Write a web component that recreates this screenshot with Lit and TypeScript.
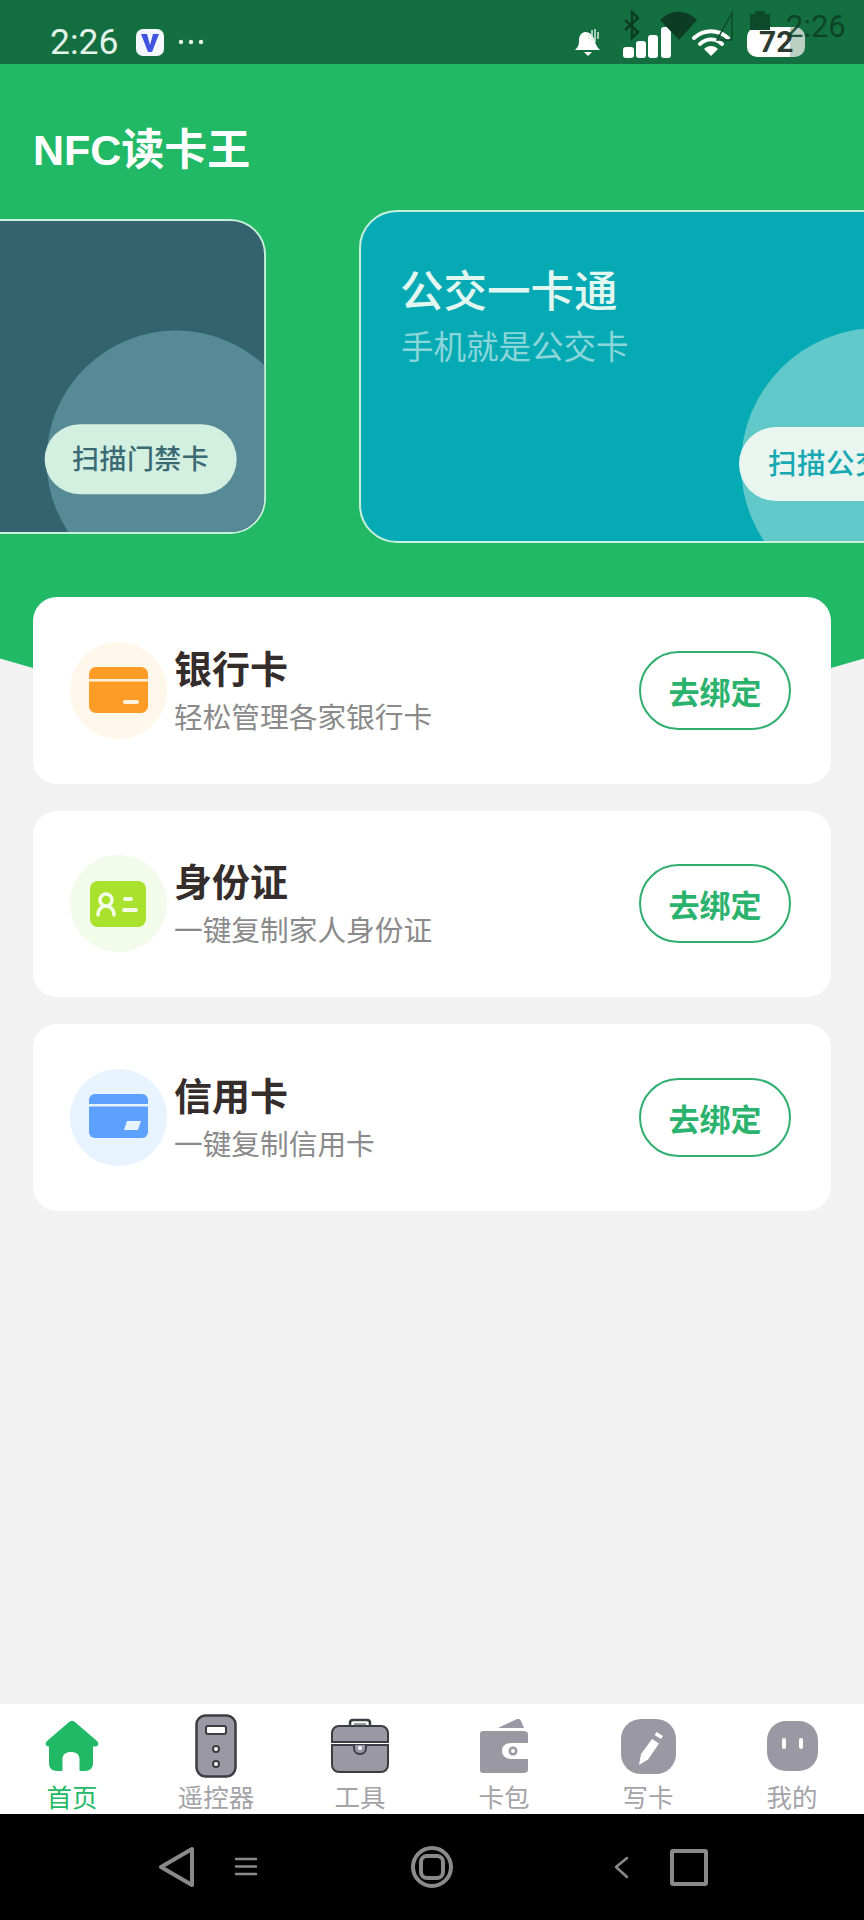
import { LitElement, html, css, svg } from "lit";
import { customElement } from "lit/decorators.js";

const items = [
  { t: "银行卡", s: "轻松管理各家银行卡", cls: "o", icon: svg`<rect x="0" y="0" width="59" height="46" rx="7" fill="#ff9c27"/><rect x="0" y="12" width="59" height="2.500" fill="#fff3e0"/><rect x="34" y="33" width="16" height="4" rx="2" fill="#fff3e0"/>` },
  { t: "身份证", s: "一键复制家人身份证", cls: "g", icon: svg`<rect x="1" y="1" width="56" height="46" rx="8" fill="#a8e22d"/><circle cx="17" cy="20" r="6" fill="none" stroke="#f4fbe6" stroke-width="3.500"/><path d="M9 35c0-6 4-9 8-9s8 3 8 9" fill="none" stroke="#f4fbe6" stroke-width="3.500" stroke-linecap="round"/><rect x="34" y="17" width="10" height="4" rx="2" fill="#f4fbe6"/><rect x="33" y="28" width="16" height="4" rx="2" fill="#f4fbe6"/>` },
  { t: "信用卡", s: "一键复制信用卡", cls: "b", icon: svg`<rect x="0" y="0" width="59" height="44" rx="6" fill="#5da1ff"/><rect x="0" y="10" width="59" height="2.500" fill="#e6f2ff"/><path d="M38 27h14l-3 9H35z" fill="#e6f2ff"/>` },
];

const tabs = [
  { l: "首页", on: true, w: 54, h: 50, vb: "0 0 54 50", icon: svg`<path d="M27 0c1.500 0 2.500.5 3.500 1.500L52 20c2.500 2.500 1.500 5.500-2 5.500h-2V42c0 5-3 8-8 8h-4c-1 0-1.500-.5-1.500-1.500V38c0-4.500-3.500-7-8.500-7s-8.500 2.500-8.500 7v10.500c0 1-.5 1.500-1.500 1.500h-4c-5 0-8-3-8-8V25.500H4c-3.500 0-4.500-3-2-5.500L23.500 1.500C24.500.5 25.500 0 27 0z" fill="#22b966"/>` },
  { l: "遥控器", w: 42, h: 64, vb: "0 0 42 64", icon: svg`<rect x="1.500" y="1.500" width="39" height="61" rx="9" fill="#9a99a3" stroke="#3c3c44" stroke-width="2.500"/><rect x="11" y="12" width="20" height="8" rx="2" fill="#fff" stroke="#3c3c44" stroke-width="2"/><circle cx="21" cy="35" r="3" fill="#fff" stroke="#3c3c44" stroke-width="2"/><circle cx="21" cy="50" r="3" fill="#fff" stroke="#3c3c44" stroke-width="2"/>` },
  { l: "工具", w: 58, h: 56, vb: "0 0 58 56", icon: svg`<path d="M19 9V5c0-2 1-3 3-3h14c2 0 3 1 3 3v4" fill="none" stroke="#3c3c44" stroke-width="2.500"/><rect x="23" y="5" width="12" height="4" fill="#9a99a3"/><path d="M8 8h42c4 0 7 3 7 7v9H1v-9c0-4 3-7 7-7z" fill="#9a99a3" stroke="#3c3c44" stroke-width="2"/><path d="M1 27h56v20c0 4-3 7-7 7H8c-4 0-7-3-7-7z" fill="#9a99a3" stroke="#3c3c44" stroke-width="2"/><path d="M23 27v3c0 4 3 6 6 6s6-2 6-6v-3" fill="#9a99a3" stroke="#3c3c44" stroke-width="2"/><circle cx="29" cy="30" r="2" fill="#fff"/>` },
  { l: "卡包", w: 48, h: 55, vb: "0 0 48 55", icon: svg`<path d="M18 9L37 0c2-.5 3 0 4 2l3 7z" fill="#9a99a3"/><path d="M3 12h41c2 0 4 1 4 3v9H32c-6 0-10 3-10 8s4 8 10 8h16v11c0 2-2 3-4 3H3c-2 0-3-1-3-3V15c0-2 1-3 3-3z" fill="#9a99a3"/><circle cx="33" cy="32" r="4.500" fill="#9a99a3"/><circle cx="33" cy="32" r="2" fill="#fff"/>` },
  { l: "写卡", w: 55, h: 55, vb: "0 0 55 55", icon: svg`<rect width="55" height="55" rx="20" fill="#9a99a3"/><path d="M31 20l7 4.500-11 16-9 5.500 2-11z" fill="#fff"/><path d="M33.500 16l2-3 6.500 4-2 3z" fill="#fff"/>` },
  { l: "我的", w: 51, h: 50, vb: "0 0 51 50", icon: svg`<rect width="51" height="50" rx="19" fill="#9a99a3"/><rect x="15" y="17" width="4" height="11" rx="2" fill="#fff"/><rect x="32" y="17" width="4" height="11" rx="2" fill="#fff"/>` },
];

@customElement("app-root")
export class AppRoot extends LitElement {
  static styles = css`
    :host { display: block; width: 864px; height: 1920px; overflow: hidden; font-family: "Liberation Sans", "Noto Sans CJK SC", sans-serif; }
    .page { height: 1920px; display: flex; flex-direction: column; background: #f2f2f2; overflow: hidden; }

    .status { position: relative; height: 64px; flex: none; background: #146f40; display: flex; align-items: center; justify-content: space-between; padding: 20px 59px 0 50px; box-sizing: border-box; font-family: Roboto, sans-serif; }
    .left, .right { display: flex; align-items: center; }
    .time { font-size: 35.500px; color: #e3f3ea; width: 86px; line-height: 40px; }
    .vbadge { width: 28px; height: 27px; margin-right: 14px; display: block; }
    .dots { display: block; width: 26px; height: 6px; }
    .bell { display: block; width: 26px; height: 28px; margin-right: 22px; }
    .signal { display: block; width: 48px; height: 31px; margin-right: 21px; }
    .wifi { display: block; width: 38px; height: 27px; margin-right: 17px; }
    .batt { width: 58px; height: 30px; border-radius: 10px; background: linear-gradient(90deg, #fff 0 74%, #b9cfc2 74%); color: #2c3a32; font-size: 30px; font-weight: 700; line-height: 30px; padding-left: 12px; box-sizing: border-box; }
    .ghost { position: absolute; left: 0; top: 0; pointer-events: none; }
    .ghost-time { position: absolute; left: 786px; top: 11px; font-size: 31px; line-height: 32px; color: #0c3d24; opacity: .85; }

    .main { position: relative; flex: 1; overflow: hidden; display: flex; flex-direction: column; }
    .main::before { content: ""; position: absolute; width: 3000px; height: 3000px; border-radius: 50%; left: -1068px; bottom: 982px; background: #22b966; }
    .title { position: relative; margin: 0; padding: 54px 33px 28px; font-size: 43px; line-height: 64px; height: 146px; box-sizing: border-box; font-weight: 700; color: #fff; }

    .carousel { position: relative; display: flex; gap: 93px; margin-left: -348px; width: 1400px; height: 333px; flex: none; }
    .slide { position: relative; width: 614px; height: 333px; flex: none; box-sizing: border-box; border: 2px solid #c9f0db; border-radius: 38px; overflow: hidden; }
    .slide.door { background: #33636f; transform: scale(.946); transform-origin: right center; }
    .slide.bus { background: #06aab5; }
    .blob { position: absolute; left: 380px; top: 116px; width: 274px; height: 274px; border-radius: 50%; }
    .door .blob { background: #568a97; }
    .bus .blob { background: #62c9cb; }
    .scan { position: absolute; left: 378px; top: 215px; height: 74px; width: 203px; border-radius: 37px; font-size: 28.500px; font-weight: 500; line-height: 74px; text-align: center; white-space: nowrap; letter-spacing: .5px; }
    .door .scan { background: #d3efe0; color: #3a6b75; }
    .bus .scan { background: #e9f6f0; color: #17a8b2; padding-left: 29px; width: 240px; text-align: left; box-sizing: border-box; }
    .slide h2 { position: absolute; left: 39px; top: 55px; margin: 0; font-size: 43.500px; line-height: 50px; font-weight: 500; color: #e3f7f1; }
    .slide p { position: absolute; left: 40px; top: 116px; margin: 0; font-size: 32.500px; line-height: 40px; color: #8bd6d9; }

    .cards { position: relative; display: flex; flex-direction: column; gap: 27px; margin: 54px 33px 0; }
    .card { height: 186.500px; background: #fff; border-radius: 24px; display: flex; align-items: center; padding: 0 40px 0 37px; box-sizing: border-box; }
    .ic { width: 97px; height: 97px; border-radius: 50%; flex: none; display: flex; align-items: center; justify-content: center; }
    .ic svg { display: block; }
    .ic.o { background: #fff8ea; }
    .ic.g { background: #f3fceb; }
    .ic.b { background: #e7f3ff; }
    .txt { flex: 1; margin-left: 7px; margin-top: 10px; }
    .txt b { display: block; font-size: 38px; line-height: 48px; font-weight: 700; color: #352d2c; margin-top: -7px; }
    .txt span { display: block; font-size: 28.700px; line-height: 40px; color: #8a8a8a; margin-top: 4px; }
    .bind { width: 152px; height: 79px; box-sizing: border-box; border: 2.500px solid #2fae6e; border-radius: 40px; display: flex; align-items: center; justify-content: center; color: #2bb26d; font-size: 31px; font-weight: 700; }

    .tabs { height: 110px; flex: none; background: #fff; display: grid; grid-template-columns: repeat(6, 1fr); }
    .tab { position: relative; display: flex; flex-direction: column; align-items: center; height: 110px; }
    .tab .iwrap { height: 74px; display: flex; align-items: center; justify-content: center; margin-top: 5px; padding-bottom: 2px; }
    .tab svg { display: block; }
    .tab span { font-size: 25.500px; line-height: 28px; color: #a3a3a8; margin-top: -1px; }
    .tab.on span { color: #22b966; }

    .sys { height: 106px; flex: none; background: #000; display: block; }
    .sys svg { display: block; }
  `;

  render() {
    return html`<div class="page">
      <div class="status">
        <div class="left">
          <span class="time">2:26</span>
          <svg class="vbadge" viewBox="0 0 28 27"><rect width="28" height="27" rx="7" fill="#f4f7ff"/><path d="M5 5h6l3 11 3-11h6l-7 18h-4z" fill="#3f55e0"/></svg>
          <svg class="dots" viewBox="0 0 26 6"><circle cx="3" cy="3" r="2.200" fill="#e3f3ea"/><circle cx="13" cy="3" r="2.200" fill="#e3f3ea"/><circle cx="23" cy="3" r="2.200" fill="#e3f3ea"/></svg>
        </div>
        <div class="right">
          <svg class="bell" viewBox="0 0 26 28"><path d="M10 4c-5 1-6 5-6 9 0 4-1 6-4 9h25c-3-3-4-5-5-8-1-5-4-10-10-10z" fill="#fff"/><path d="M9 24h8l-4 4z" fill="#fff"/><path d="M14 5v6M17 2v11M20 1v13M23 4v7" stroke="#d6efe0" stroke-width="1.500"/></svg>
          <svg class="signal" viewBox="0 0 48 31"><rect x="0" y="20" width="11" height="11" rx="3" fill="#fff"/><rect x="13" y="14" width="10" height="17" rx="3" fill="#fff"/><rect x="25" y="8" width="10" height="23" rx="3" fill="#fff"/><rect x="38" y="0" width="10" height="31" rx="3" fill="#fff"/></svg>
          <svg class="wifi" viewBox="0 0 38 27"><path d="M2 9c10-9 24-9 34 0M8 15c7-6 15-6 22 0" fill="none" stroke="#fff" stroke-width="4" stroke-linecap="round"/><path d="M12 20c4-4 10-4 14 0l-7 7z" fill="#fff"/></svg>
          <span class="batt">72</span>
        </div>
        <svg class="ghost" width="864" height="64" viewBox="0 0 864 64">
          <path d="M625 20l13 12-6 6V12l6 6-13 12" fill="none" stroke="#0c3d24" stroke-width="2.500"/>
          <path d="M660 20c11-11 26-11 37 0l-18 20z" fill="#0c3d24"/>
          <path d="M732 13v27h-15z" fill="none" stroke="#0c4a2b" stroke-width="1.500"/>
          <path d="M755 11h10v3h5v16h-20V14h5z" fill="#0c4a2b"/>
        </svg>
        <span class="ghost-time">2:26</span>
      </div>

      <div class="main">
        <h1 class="title">NFC读卡王</h1>
        <div class="carousel">
          <div class="slide door"><div class="blob"></div><div class="scan">扫描门禁卡</div></div>
          <div class="slide bus"><h2>公交一卡通</h2><p>手机就是公交卡</p><div class="blob"></div><div class="scan">扫描公交卡</div></div>
        </div>
        <div class="cards">
          ${items.map(i => html`<div class="card">
            <div class="ic ${i.cls}"><svg width="59" height="47" viewBox="0 0 59 47">${i.icon}</svg></div>
            <div class="txt"><b>${i.t}</b><span>${i.s}</span></div>
            <div class="bind">去绑定</div>
          </div>`)}
        </div>
      </div>

      <div class="tabs">
        ${tabs.map(t => html`<div class="tab ${t.on ? "on" : ""}">
          <div class="iwrap"><svg width=${t.w} height=${t.h} viewBox=${t.vb}>${t.icon}</svg></div>
          <span>${t.l}</span>
        </div>`)}
      </div>

      <div class="sys">
        <svg width="864" height="106" viewBox="0 0 864 106">
          <g fill="none" stroke="#8a8a8a" stroke-width="4" stroke-linejoin="round" stroke-linecap="round">
            <path d="M192 35v36l-31-18z"/>
            <path d="M236 45h20M236 52.500h20M236 60h20" stroke-width="2.500"/>
            <circle cx="432" cy="53" r="19"/>
            <rect x="421" y="42" width="22" height="22" rx="6"/>
            <path d="M627 44l-11 9 11 10" stroke-width="2.500"/>
            <rect x="672" y="37" width="34" height="33" rx="1"/>
          </g>
        </svg>
      </div>
    </div>`;
  }
}
